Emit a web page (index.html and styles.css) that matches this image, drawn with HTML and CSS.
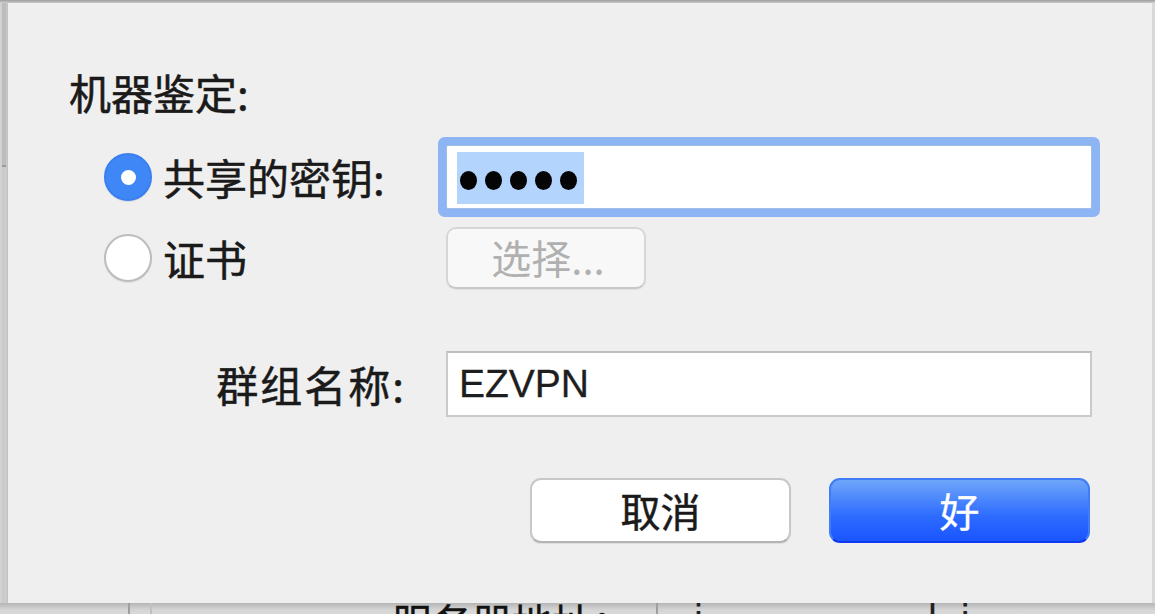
FILE: index.html
```html
<!DOCTYPE html>
<html lang="zh-CN">
<head>
<meta charset="utf-8">
<title>机器鉴定</title>
<link rel="stylesheet" href="styles.css">
</head>
<body>
<div class="screen">
  <div class="topbar"></div>
  <div class="middle">
    <div class="leftedge"><div class="leftedge-dark"></div></div>
    <div class="dialog">
      <div class="title">机器鉴定:</div>
      <div class="form">
        <div class="cell-left">
          <span class="radio radio-on"></span>
          <span class="label">共享的密钥:</span>
        </div>
        <div class="pw" aria-label="密码">
          <span class="sel"><i class="dot"></i><i class="dot"></i><i class="dot"></i><i class="dot"></i><i class="dot"></i></span>
        </div>

        <div class="cell-left">
          <span class="radio"></span>
          <span class="label">证书</span>
        </div>
        <div class="cell-right">
          <span class="choose">选择...</span>
        </div>

        <div class="cell-left cell-label">
          <span class="label label-wide">群组名称:</span>
        </div>
        <div class="field">EZVPN</div>
      </div>
      <div class="buttons">
        <span class="btn btn-cancel">取消</span>
        <span class="btn btn-ok">好</span>
      </div>
    </div>
    <div class="rightedge"></div>
  </div>
  <div class="under">
    <span class="vline v1"></span>
    <span class="vline v2"></span>
    <span class="under-text">服务器地址：</span>
    <span class="vline v3"></span>
    <span class="under-mark m1">i</span>
    <span class="under-mark m2">l</span>
    <span class="under-mark m3">i</span>
  </div>
</div>
</body>
</html>
```

FILE: styles.css
```css
html, body {
  margin: 0;
  padding: 0;
  background: #efefef;
}

.screen {
  width: 1155px;
  height: 614px;
  overflow: hidden;
  display: flex;
  flex-direction: column;
  background: #dedede;
  font-family: "Noto Sans CJK SC", "Liberation Sans", sans-serif;
  color: #1a1a1a;
}

.topbar {
  height: 3px;
  flex: none;
  background: linear-gradient(#9c9c9c, #d2d2d2);
}

.middle {
  height: 600px;
  flex: none;
  display: flex;
}

.leftedge {
  width: 8px;
  flex: none;
  background: linear-gradient(to right, #d6d6d6, #c8c8c8 40%, #d9d9d9);
}

.leftedge-dark {
  width: 4px;
  height: 162px;
  margin-left: 2px;
  background: #bdbdbd;
  border-bottom: 2px solid #9a9a9a;
}

.dialog {
  flex: 1;
  background: #efefef;
  box-shadow: -1px 0 2px rgba(0,0,0,0.15);
  padding-top: 65px;
  display: flex;
  flex-direction: column;
}

.rightedge {
  width: 3px;
  flex: none;
  background: #d8d8d8;
}

.title {
  margin-left: 61px;
  font-size: 42px;
  line-height: 48px;
  -webkit-text-stroke: 0.5px #1a1a1a;
}

.form {
  margin-top: 29px;
  display: grid;
  grid-template-columns: 438px 646px;
  grid-template-rows: 64px 62px 110px;
  row-gap: 18px;
}

.form > .cell-left:nth-child(5),
.form > .field {
  margin-top: 44px;
}

.cell-left {
  display: flex;
  align-items: center;
  gap: 11px;
  padding-left: 96px;
}

.cell-label {
  justify-content: flex-end;
  padding-left: 0;
  padding-right: 40px;
}

.label {
  font-size: 42px;
  line-height: 48px;
  -webkit-text-stroke: 0.5px #1a1a1a;
}

.label-wide {
  letter-spacing: 2px;
}

.radio {
  width: 48px;
  height: 48px;
  border-radius: 50%;
  box-sizing: border-box;
  background: #ffffff;
  border: 2px solid #bdbdbd;
  box-shadow: 0 1px 1px rgba(0,0,0,0.08);
  display: flex;
  align-items: center;
  justify-content: center;
  flex: none;
}

.radio-on {
  background: #3f87f6;
  border-color: #3a7ff0;
}

.radio-on::after {
  content: "";
  width: 15px;
  height: 15px;
  border-radius: 50%;
  background: #ffffff;
}

.pw {
  background: #ffffff;
  border: 1px solid #9fbde9;
  border-radius: 2px;
  box-shadow: 0 0 0 8px #8db5f3;
  box-sizing: border-box;
  height: 64px;
  display: flex;
  align-items: flex-start;
}

.sel {
  margin: 6px 0 0 10px;
  height: 52px;
  padding: 0 7px 0 3px;
  display: inline-flex;
  align-items: center;
  gap: 8px;
  background: #b3d4fd;
}

.dot {
  width: 17px;
  height: 19px;
  border-radius: 50%;
  background: #050505;
  margin-top: 4px;
}

.cell-right {
  display: flex;
  align-items: stretch;
}

.choose {
  width: 200px;
  box-sizing: border-box;
  border: 2px solid #d6d6d6;
  border-bottom-color: #c8c8c8;
  border-radius: 10px;
  background: #f8f8f8;
  color: #b0b0b0;
  font-size: 40px;
  line-height: 56px;
  text-align: center;
  padding-left: 4px;
  box-shadow: 0 1px 1px rgba(0,0,0,0.06);
}

.field {
  height: 66px;
  box-sizing: border-box;
  background: #ffffff;
  border: 2px solid #cacaca;
  border-top-color: #bdbdbd;
  font-family: "Liberation Sans", sans-serif;
  font-size: 39px;
  line-height: 62px;
  padding-left: 11px;
  color: #1e1e1e;
  -webkit-text-stroke: 0.3px #1e1e1e;
}

.buttons {
  margin-top: 61px;
  display: flex;
  justify-content: flex-end;
  gap: 38px;
  padding-right: 62px;
}

.btn {
  width: 261px;
  height: 65px;
  box-sizing: border-box;
  border-radius: 11px;
  font-size: 40px;
  line-height: 61px;
  text-align: center;
}

.btn-cancel {
  background: #ffffff;
  border: 2px solid #c8c8c8;
  border-bottom-color: #b4b4b4;
  color: #1a1a1a;
  -webkit-text-stroke: 0.5px #1a1a1a;
  box-shadow: 0 1px 1px rgba(0,0,0,0.08);
}

.btn-ok {
  background: linear-gradient(#6ea6f9, #2d6bff 60%, #1a55ff);
  border: 2px solid #3f7cf5;
  border-bottom-color: #1039ef;
  color: #ffffff;
  -webkit-text-stroke: 0.3px #ffffff;
}

.under {
  flex: none;
  height: 11px;
  display: flex;
  align-items: flex-start;
  background: linear-gradient(#b5b5b5, #d4d4d4 60%, #dadada);
  overflow: hidden;
}

.vline {
  width: 2px;
  height: 11px;
  background: #9e9e9e;
  flex: none;
}

.v1 { margin-left: 128px; }
.v2 { margin-left: 20px; background: #c0c0c0; }
.v3 { margin-left: 44px; }

.under-text {
  margin-left: 240px;
  font-size: 40px;
  line-height: 40px;
  margin-top: -2px;
  color: #111;
  white-space: nowrap;
  width: 220px;
  overflow: hidden;
  flex: none;
  -webkit-text-stroke: 0.5px #111;
}

.under-mark {
  font-family: "Liberation Sans", sans-serif;
  font-size: 40px;
  line-height: 40px;
  margin-top: -4px;
  color: #222;
}

.m1 { margin-left: 36px; }
.m2 { margin-left: 225px; }
.m3 { margin-left: 24px; }
```
